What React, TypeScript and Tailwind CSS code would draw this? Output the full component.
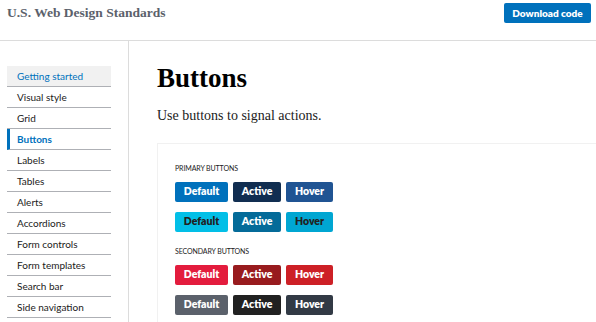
import React from "react";

const serif = { fontFamily: '"Liberation Serif", serif' };

const navItems = [
  "Getting started",
  "Visual style",
  "Grid",
  "Buttons",
  "Labels",
  "Tables",
  "Alerts",
  "Accordions",
  "Form controls",
  "Form templates",
  "Search bar",
  "Side navigation",
];

type Btn = { label: string; cls: string; w: string };

function ButtonRow({ items }: { items: Btn[] }) {
  return (
    <div className="flex gap-[5px]">
      {items.map((b) => (
        <div
          key={b.label}
          className={`h-[20px] ${b.w} rounded-[2px] flex items-center justify-center text-[10.5px] font-extrabold ${b.cls}`}
        >
          {b.label}
        </div>
      ))}
    </div>
  );
}

export default function App() {
  return (
    <div
      className="w-[596px] h-[322px] overflow-hidden bg-white text-[#212121]"
      style={{ fontFamily: 'Lato, "Open Sans", sans-serif' }}
    >
      <header className="h-[41px] border-b border-[#dcdcdc] flex items-start justify-between pl-[7px] pr-[5px]">
        <div
          className="mt-[4px] text-[13.5px] font-bold text-[#5b616b] leading-[18px]"
          style={serif}
        >
          U.S. Web Design Standards
        </div>
        <div className="mt-[3px] h-[20px] w-[87px] rounded-[2px] bg-[#0071bc] text-white text-[10px] font-extrabold flex items-center justify-center">
          Download code
        </div>
      </header>
      <div className="flex h-[281px]">
        <aside className="w-[129px] shrink-0 border-r border-[#dcdcdc] pl-[7px] pr-[17px] pt-[25px]">
          {navItems.map((item, i) => {
            const first = i === 0;
            const active = item === "Buttons";
            return (
              <div
                key={item}
                className={`h-[21px] flex items-center border-b border-[#aeb0b5] text-[10px] ${
                  first ? "bg-[#f1f1f1] text-[#0071bc]" : ""
                } ${
                  active
                    ? "border-l-[3px] border-l-[#0071bc] pl-[7px] text-[#0071bc] font-bold"
                    : "pl-[10px]"
                }`}
              >
                {item}
              </div>
            );
          })}
        </aside>
        <main className="flex-1 pl-[28px] pt-[21px]">
          <h1
            className="text-[27px] font-bold leading-[32px] text-[#000]"
            style={serif}
          >
            Buttons
          </h1>
          <p className="mt-[13px] text-[14px] leading-[18px]" style={serif}>
            Use buttons to signal actions.
          </p>
          <div className="mt-[18px] border-t border-l border-[#f1f1f1] pl-[17px] pt-[20px] h-[200px]">
            <div className="text-[7px] leading-[8px] uppercase tracking-[-0.1px]">
              Primary buttons
            </div>
            <div className="mt-[10px] flex flex-col gap-[10px]">
              <ButtonRow
                items={[
                  { label: "Default", cls: "bg-[#0071bc] text-white", w: "w-[53px]" },
                  { label: "Active", cls: "bg-[#112e51] text-white", w: "w-[48px]" },
                  { label: "Hover", cls: "bg-[#205493] text-white", w: "w-[47px]" },
                ]}
              />
              <ButtonRow
                items={[
                  { label: "Default", cls: "bg-[#02bfe7] text-[#212121]", w: "w-[53px]" },
                  { label: "Active", cls: "bg-[#046b99] text-white", w: "w-[48px]" },
                  { label: "Hover", cls: "bg-[#00a6d2] text-[#212121]", w: "w-[47px]" },
                ]}
              />
            </div>
            <div className="mt-[15px] text-[7px] leading-[8px] uppercase tracking-[-0.1px]">
              Secondary buttons
            </div>
            <div className="mt-[10px] flex flex-col gap-[10px]">
              <ButtonRow
                items={[
                  { label: "Default", cls: "bg-[#e31c3d] text-white", w: "w-[53px]" },
                  { label: "Active", cls: "bg-[#981b1e] text-white", w: "w-[48px]" },
                  { label: "Hover", cls: "bg-[#cd2026] text-white", w: "w-[47px]" },
                ]}
              />
              <ButtonRow
                items={[
                  { label: "Default", cls: "bg-[#5b616b] text-white", w: "w-[53px]" },
                  { label: "Active", cls: "bg-[#212121] text-white", w: "w-[48px]" },
                  { label: "Hover", cls: "bg-[#323a45] text-white", w: "w-[47px]" },
                ]}
              />
            </div>
          </div>
        </main>
      </div>
    </div>
  );
}
